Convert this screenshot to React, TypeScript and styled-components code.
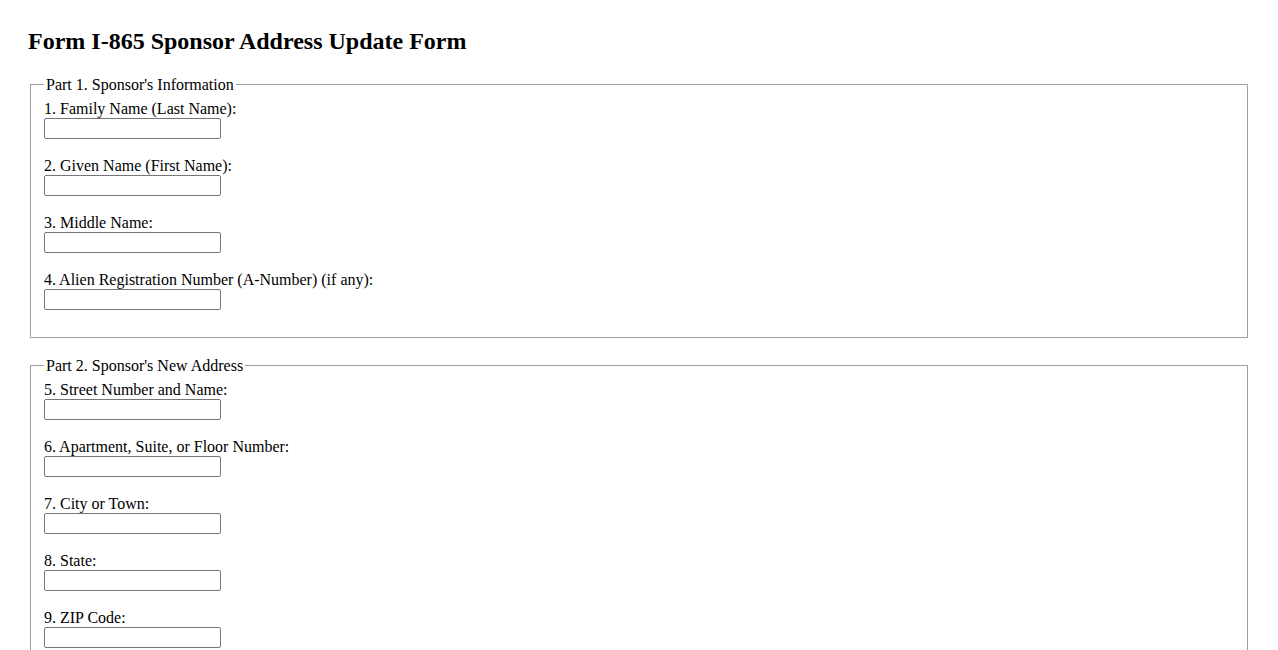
import React from 'react'
import { styled, createGlobalStyle } from 'styled-components'

const GlobalStyle = createGlobalStyle`
  body {
    margin: 28px;
    background: #ffffff;
    color: #000000;
    font-family: "Liberation Serif", "Times New Roman", serif;
    font-size: 16px;
  }
`

const Title = styled.h2`
  font-size: 24px;
  font-weight: 700;
  line-height: 27.5px;
  margin: 0 0 20px;
`

const Section = styled.fieldset`
  margin: 0 2px 19px;
  padding: 5.6px 12px 9px 13px;
  border: 1px solid #a0a0a0;
  min-width: 0;
`

const Legend = styled.legend`
  padding: 0 2px;
  font-size: 16px;
  line-height: 18.4px;
`

const Field = styled.div`
  display: flex;
  flex-direction: column;
  align-items: flex-start;
  margin-bottom: 18px;
`

const Label = styled.label`
  display: block;
  font-size: 16px;
  line-height: 18px;
`

const TextInput = styled.input`
  box-sizing: border-box;
  width: 177px;
  height: 21px;
  margin: 0;
  padding: 1px 2px;
  border: 1px solid #767676;
  border-radius: 2px;
  background: #ffffff;
  font-family: "Liberation Sans", Arial, sans-serif;
  font-size: 13.33px;
`

type FieldDef = { id: string; label: string }

const partOne: FieldDef[] = [
  { id: 'familyName', label: '1. Family Name (Last Name):' },
  { id: 'givenName', label: '2. Given Name (First Name):' },
  { id: 'middleName', label: '3. Middle Name:' },
  { id: 'aNumber', label: '4. Alien Registration Number (A-Number) (if any):' },
]

const partTwo: FieldDef[] = [
  { id: 'street', label: '5. Street Number and Name:' },
  { id: 'apt', label: '6. Apartment, Suite, or Floor Number:' },
  { id: 'city', label: '7. City or Town:' },
  { id: 'state', label: '8. State:' },
  { id: 'zip', label: '9. ZIP Code:' },
]

const Fields: React.FC<{ items: FieldDef[] }> = ({ items }) => (
  <>
    {items.map((f) => (
      <Field key={f.id}>
        <Label htmlFor={f.id}>{f.label}</Label>
        <TextInput id={f.id} type="text" />
      </Field>
    ))}
  </>
)

export default function App() {
  return (
    <>
      <GlobalStyle />
      <Title>Form I-865 Sponsor Address Update Form</Title>
      <form>
        <Section>
          <Legend>Part 1. Sponsor's Information</Legend>
          <Fields items={partOne} />
        </Section>
        <Section>
          <Legend>Part 2. Sponsor's New Address</Legend>
          <Fields items={partTwo} />
        </Section>
      </form>
    </>
  )
}
